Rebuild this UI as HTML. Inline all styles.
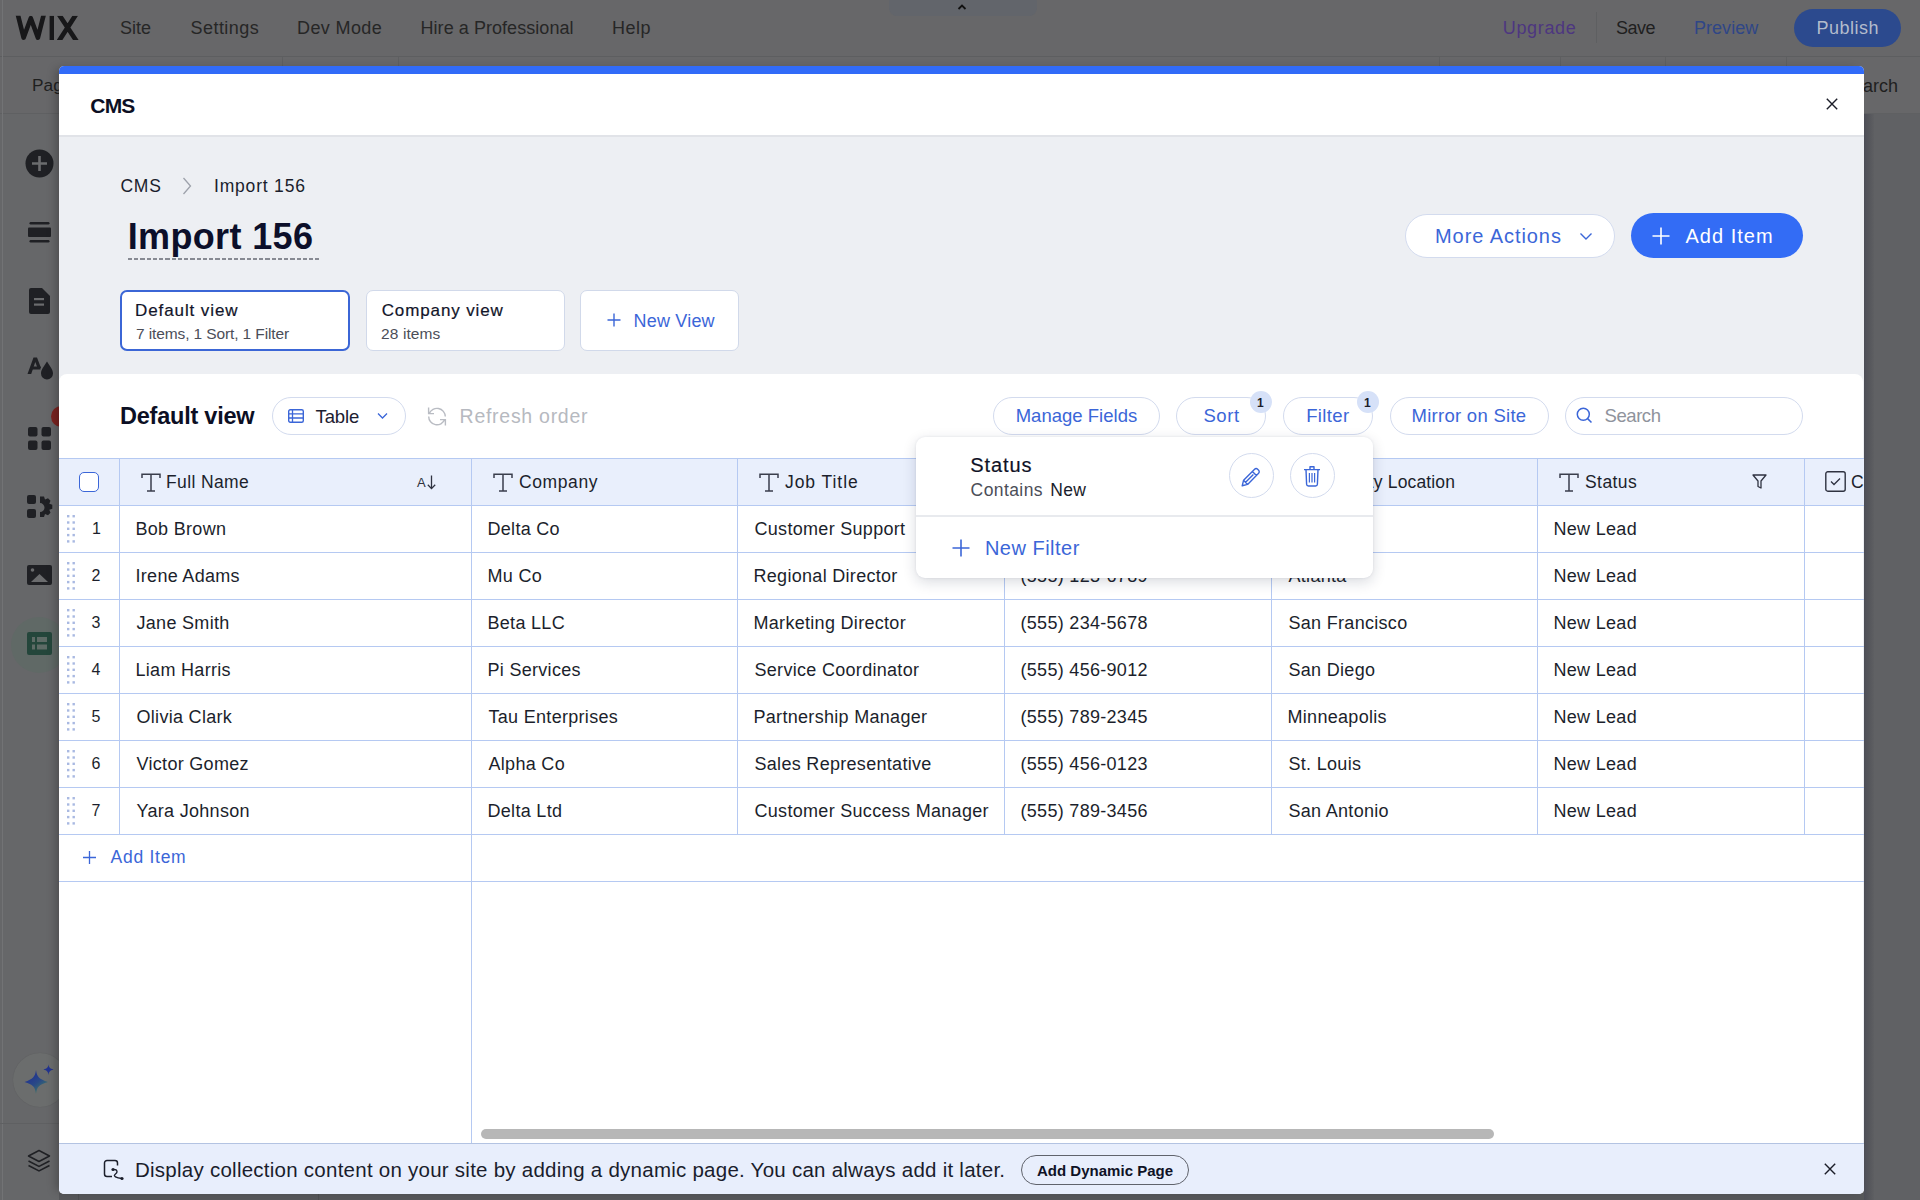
<!DOCTYPE html>
<html><head><meta charset="utf-8"><title>CMS</title>
<style>
html,body{margin:0;padding:0;}
body{width:1920px;height:1200px;position:relative;overflow:hidden;background:#68696b;font-family:"Liberation Sans",sans-serif;}
.a{position:absolute;}
.t{position:absolute;white-space:nowrap;}
#modal{position:absolute;left:59px;top:66px;width:1805px;height:1128px;overflow:hidden;border-radius:5px;}
#inner{position:absolute;left:-59px;top:-66px;width:1920px;height:1200px;}
</style></head><body>
<div class="a" style="left:0px;top:0px;width:1920px;height:56px;background:#676769;"></div>
<div class="a" style="left:0px;top:56px;width:1920px;height:1px;background:#5d5e60;"></div>
<div class="a" style="left:0px;top:57px;width:1920px;height:56px;background:#676769;"></div>
<div class="a" style="left:0px;top:113px;width:1920px;height:1px;background:#5f6062;"></div>
<div class="a" style="left:0px;top:114px;width:59px;height:1086px;background:#666769;"></div>
<div class="a" style="left:2px;top:0px;width:1px;height:1200px;background:#727375;"></div>
<div class="a" style="left:1864px;top:114px;width:56px;height:1086px;background:#606164;"></div>
<div class="a" style="left:1864px;top:114px;width:10px;height:1086px;background:linear-gradient(90deg,#4d4e57,#55565b 50%,#5e5f62);"></div>
<div class="a" style="left:282px;top:57px;width:1px;height:56px;background:#5e5f61;"></div>
<div class="a" style="left:398px;top:57px;width:1px;height:56px;background:#5e5f61;"></div>
<div class="a" style="left:1439px;top:57px;width:1px;height:56px;background:#5e5f61;"></div>
<div class="a" style="left:1560px;top:57px;width:1px;height:56px;background:#5e5f61;"></div>
<div class="a" style="left:1665px;top:57px;width:1px;height:56px;background:#5e5f61;"></div>
<div class="a" style="left:1786px;top:57px;width:1px;height:56px;background:#5e5f61;"></div>
<div class="a" style="left:889px;top:-6px;width:148px;height:22px;background:#62656b;border-radius:8px;"></div>
<svg class="a" style="left:956px;top:2px" width="12" height="9" viewBox="0 0 12 9"><path d="M2.5 7 L6 3.5 L9.5 7" fill="none" stroke="#111" stroke-width="1.8"/></svg>
<svg class="a" style="left:0px;top:0px" width="90" height="56" viewBox="0 0 90 56"><defs><clipPath id="wc"><rect x="0" y="15.8" width="90" height="24.2"/></clipPath></defs><g clip-path="url(#wc)"><path d="M17.2 12 L23.6 37.6 L30.8 18.2 L37.9 37.6 L44.4 12" fill="none" stroke="#171719" stroke-width="4.6" stroke-linejoin="round"/><path d="M49.6 15.8 H54 V40 H49.6z" fill="#171719"/><path d="M57 15.8 L62.6 15.8 L78.6 40 L73 40z M72.4 15.8 L78 15.8 L62.4 40 L56.8 40z" fill="#171719"/></g></svg>
<div class="t " style="left:120.00px;top:19.16px;font-size:18px;line-height:18px;color:#262626;">Site</div>
<div class="t " style="left:190.50px;top:19.16px;font-size:18px;line-height:18px;color:#262626;letter-spacing:0.459px;">Settings</div>
<div class="t " style="left:297.00px;top:19.16px;font-size:18px;line-height:18px;color:#262626;letter-spacing:0.389px;">Dev Mode</div>
<div class="t " style="left:420.50px;top:19.16px;font-size:18px;line-height:18px;color:#262626;letter-spacing:0.052px;">Hire a Professional</div>
<div class="t " style="left:612.10px;top:19.16px;font-size:18px;line-height:18px;color:#262626;letter-spacing:0.430px;">Help</div>
<div class="t " style="left:1502.75px;top:19.16px;font-size:18px;line-height:18px;color:#4d3680;letter-spacing:0.661px;">Upgrade</div>
<div class="a" style="left:1596px;top:12px;width:1px;height:31px;background:#5e5f61;"></div>
<div class="t " style="left:1616.00px;top:19.16px;font-size:18px;line-height:18px;color:#1f1f1f;letter-spacing:-0.506px;">Save</div>
<div class="t " style="left:1694.00px;top:19.16px;font-size:18px;line-height:18px;color:#2f4687;letter-spacing:0.038px;">Preview</div>
<div class="a" style="left:1794px;top:9px;width:107px;height:38px;background:#2c4a8e;border-radius:19px;"></div>
<div class="t " style="left:1816.50px;top:19.16px;font-size:18px;line-height:18px;color:#b3bccc;letter-spacing:0.496px;">Publish</div>
<div class="t " style="left:32.00px;top:77.06px;font-size:17.3px;line-height:17.3px;color:#1f1f1f;">Pages</div>
<div class="t " style="left:1841.00px;top:76.76px;font-size:18px;line-height:18px;color:#1f1f1f;">Search</div>
<svg class="a" style="left:25px;top:149px" width="29" height="29" viewBox="0 0 29 29"><circle cx="14.5" cy="14.5" r="14" fill="#1f2024"/><path d="M14.5 7v15M7 14.5h15" stroke="#6b6c6e" stroke-width="2.6"/></svg>
<svg class="a" style="left:28px;top:221px" width="23" height="22" viewBox="0 0 23 22"><rect x="1.5" y="1" width="20" height="2.5" rx="1.2" fill="#1f2024"/><rect x="0" y="6.5" width="23" height="9.5" rx="1" fill="#1f2024"/><rect x="1.5" y="19" width="20" height="2.5" rx="1.2" fill="#1f2024"/></svg>
<svg class="a" style="left:29px;top:288px" width="21" height="26" viewBox="0 0 21 26"><path d="M2 0h11l8 8v16a2 2 0 0 1-2 2H2a2 2 0 0 1-2-2V2a2 2 0 0 1 2-2z" fill="#1f2024"/><rect x="5" y="10" width="10" height="2.2" fill="#6b6c6e"/><rect x="5" y="15.5" width="10" height="2.2" fill="#6b6c6e"/></svg>
<svg class="a" style="left:27px;top:357px" width="27" height="24" viewBox="0 0 27 24"><path d="M0.5 17 L6.5 0.5 H10 L14 11 H10.5 L8.3 5 L4.2 17z" fill="#1f2024"/><path d="M5 9.5h8.5v3H5z" fill="#1f2024"/><path d="M20 4.5 C22 8 26 12 26 16.5 A6 6 0 0 1 14 16.5 C14 12 18 8 20 4.5z" fill="#1f2024"/></svg>
<div class="a" style="left:51px;top:406px;width:21px;height:21px;background:#7b2320;border-radius:50%;"></div>
<svg class="a" style="left:28px;top:427px" width="23" height="23" viewBox="0 0 23 23"><rect x="0" y="0" width="9.5" height="9.5" rx="2" fill="#1f2024"/><rect x="13.5" y="0" width="9.5" height="9.5" rx="2" fill="#1f2024"/><rect x="0" y="13.5" width="9.5" height="9.5" rx="2" fill="#1f2024"/><rect x="13.5" y="13.5" width="9.5" height="9.5" rx="2" fill="#1f2024"/></svg>
<svg class="a" style="left:26px;top:495px" width="28" height="23" viewBox="0 0 28 23"><rect x="1" y="0" width="9" height="9" rx="2" fill="#1f2024"/><rect x="1" y="14" width="9" height="9" rx="2" fill="#1f2024"/><path d="M14 1.5 h4 l1 3 l3-1.2 l2.5 2.5 l-1.2 3 l3 1 v4 l-3 1 l1.2 3 l-2.5 2.5 l-3-1.2 l-1 3 h-4 v-5 a4.5 4.5 0 0 0 0-9z" fill="#1f2024"/></svg>
<svg class="a" style="left:27px;top:565px" width="25" height="20" viewBox="0 0 25 20"><rect x="0" y="0" width="25" height="20" rx="2" fill="#1f2024"/><circle cx="5.5" cy="5" r="1.8" fill="#6b6c6e"/><path d="M4 17 L12.5 9 L21 17z" fill="#6b6c6e"/></svg>
<div class="a" style="left:11px;top:617px;width:56px;height:56px;background:#606966;border-radius:50%;"></div>
<svg class="a" style="left:27px;top:632px" width="25" height="23" viewBox="0 0 25 23"><rect x="0" y="0" width="25" height="23" rx="2" fill="#24463b"/><rect x="5" y="5" width="3" height="5" fill="#5e6b66"/><rect x="10" y="5" width="10" height="5" fill="#5e6b66"/><rect x="5" y="12.5" width="3" height="5" fill="#5e6b66"/><rect x="10" y="12.5" width="10" height="5" fill="#5e6b66"/></svg>
<div class="a" style="left:13px;top:1053px;width:54px;height:54px;background:#6b6d6d;border-radius:50%;box-shadow:0 0 1px rgba(0,0,0,0.15);"></div>
<svg class="a" style="left:24px;top:1063px" width="32" height="33" viewBox="0 0 32 33"><defs><linearGradient id="g1" x1="0.2" y1="0.1" x2="0.8" y2="0.9"><stop offset="0" stop-color="#1f2d92"/><stop offset="0.55" stop-color="#2a4a86"/><stop offset="1" stop-color="#3f7d62"/></linearGradient></defs><path d="M12 7 C13 14 15 16 24 19 C15 21.5 13 23.5 12 31 C11 23.5 9 21.5 0.5 19 C9 16 11 14 12 7z" fill="url(#g1)"/><path d="M24.5 1.5 C25 4.5 25.8 5.3 29.5 6.5 C25.8 7.7 25 8.5 24.5 12 C24 8.5 23.2 7.7 19.5 6.5 C23.2 5.3 24 4.5 24.5 1.5z" fill="#22338f"/></svg>
<div class="a" style="left:0px;top:1123px;width:59px;height:1px;background:#5f6062;"></div>
<svg class="a" style="left:27px;top:1149px" width="24" height="24" viewBox="0 0 24 24"><path d="M12 1.5 L22.5 7 L12 12.5 L1.5 7z" fill="none" stroke="#1f2024" stroke-width="1.5" stroke-linejoin="round"/><path d="M1.5 12 L12 17.5 L22.5 12" fill="none" stroke="#1f2024" stroke-width="1.5"/><path d="M1.5 16.5 L12 22 L22.5 16.5" fill="none" stroke="#1f2024" stroke-width="1.5"/></svg>
<div class="a" style="left:59px;top:1193px;width:1805px;height:7px;background:#56575a;"></div>
<div class="a" style="left:78px;top:1194px;width:1px;height:6px;background:#4d4e50;"></div>
<div class="a" style="left:318px;top:1194px;width:1px;height:6px;background:#4d4e50;"></div>
<div class="a" style="left:59px;top:66px;width:1805px;height:1128px;border-radius:5px;box-shadow:-6px 0 10px -3px rgba(0,0,0,0.25);background:#fff;"></div>
<div id="modal"><div id="inner">
<div class="a" style="left:59px;top:66px;width:1805px;height:8px;background:#316bf8;"></div>
<div class="a" style="left:59px;top:74px;width:1805px;height:61px;background:#ffffff;"></div>
<div class="a" style="left:59px;top:135px;width:1805px;height:2px;background:#e1e3e8;"></div>
<div class="a" style="left:59px;top:137px;width:1805px;height:1006px;background:#edeff3;"></div>
<div class="t " style="left:90.30px;top:94.92px;font-size:21px;line-height:21px;color:#0c0f24;font-weight:700;letter-spacing:-0.829px;">CMS</div>
<svg class="a" style="left:1826px;top:98px" width="12" height="12" viewBox="0 0 12 12"><path d="M0.8 0.8 L11.2 11.2 M11.2 0.8 L0.8 11.2" stroke="#1b1d28" stroke-width="1.4"/></svg>
<div class="t " style="left:120.40px;top:178.49px;font-size:17.5px;line-height:17.5px;color:#1a1d2c;letter-spacing:0.842px;">CMS</div>
<svg class="a" style="left:182px;top:177px" width="10" height="18" viewBox="0 0 10 18"><path d="M1.5 1 L8.5 9 L1.5 17" fill="none" stroke="#9ea2ab" stroke-width="1.3"/></svg>
<div class="t " style="left:214.00px;top:178.49px;font-size:17.5px;line-height:17.5px;color:#1a1d2c;letter-spacing:0.809px;">Import 156</div>
<div class="t " style="left:127.70px;top:218.73px;font-size:36px;line-height:36px;color:#0c0f2a;font-weight:700;letter-spacing:0.352px;">Import 156</div>
<div class="a" style="left:127.8px;top:258px;width:191px;height:2px;background:repeating-linear-gradient(90deg,#878a93 0 4px,transparent 4px 6.25px);"></div>
<div class="a" style="left:120px;top:290px;width:230px;height:61px;box-sizing:border-box;background:#fff;border:2px solid #3b66d6;border-radius:7px;"></div>
<div class="t " style="left:135.00px;top:301.61px;font-size:17px;line-height:17px;color:#12152a;letter-spacing:0.907px;-webkit-text-stroke:0.2px currentColor;">Default view</div>
<div class="t " style="left:136.00px;top:326.48px;font-size:15.5px;line-height:15.5px;color:#4b4e58;letter-spacing:-0.114px;">7 items, 1 Sort, 1 Filter</div>
<div class="a" style="left:366px;top:290px;width:199px;height:61px;box-sizing:border-box;background:#fff;border:1px solid #d1d9ea;border-radius:7px;"></div>
<div class="t " style="left:381.70px;top:301.61px;font-size:17px;line-height:17px;color:#12152a;letter-spacing:0.881px;-webkit-text-stroke:0.2px currentColor;">Company view</div>
<div class="t " style="left:381.00px;top:326.48px;font-size:15.5px;line-height:15.5px;color:#4b4e58;letter-spacing:0.110px;">28 items</div>
<div class="a" style="left:580px;top:290px;width:159px;height:61px;box-sizing:border-box;background:#fff;border:1px solid #d1d9ea;border-radius:7px;"></div>
<svg class="a" style="left:607px;top:313px" width="14" height="14" viewBox="0 0 14 14"><path d="M7 0.5v13M0.5 7h13" stroke="#3b66d8" stroke-width="1.4"/></svg>
<div class="t " style="left:633.60px;top:311.76px;font-size:18px;line-height:18px;color:#3b66d8;letter-spacing:0.186px;">New View</div>
<div class="a" style="left:1405px;top:214px;width:210px;height:44px;box-sizing:border-box;background:#fff;border:1px solid #d3dbee;border-radius:22px;"></div>
<div class="t " style="left:1435.00px;top:226.27px;font-size:20px;line-height:20px;color:#3b66d8;letter-spacing:0.936px;">More Actions</div>
<svg class="a" style="left:1579px;top:232px" width="14" height="9" viewBox="0 0 14 9"><path d="M1.5 1.5 L7 7 L12.5 1.5" fill="none" stroke="#3b66d8" stroke-width="1.4"/></svg>
<div class="a" style="left:1631px;top:213px;width:172px;height:45px;background:#336cf5;border-radius:23px;"></div>
<svg class="a" style="left:1652px;top:227px" width="18" height="18" viewBox="0 0 18 18"><path d="M9 0.5v17M0.5 9h17" stroke="#fff" stroke-width="1.6"/></svg>
<div class="t " style="left:1685.50px;top:226.27px;font-size:20px;line-height:20px;color:#ffffff;letter-spacing:1.017px;">Add Item</div>
<div class="a" style="left:59px;top:374px;width:1804px;height:769px;background:#fff;border-radius:8px 8px 0 0;"></div>
<div class="t " style="left:120.00px;top:404.81px;font-size:23.5px;line-height:23.5px;color:#0c0f24;font-weight:700;letter-spacing:-0.231px;">Default view</div>
<div class="a" style="left:272px;top:397px;width:134px;height:38px;box-sizing:border-box;border:1px solid #d3dbee;border-radius:19px;background:#fff;"></div>
<svg class="a" style="left:288px;top:409px" width="16" height="14" viewBox="0 0 16 14"><rect x="0.7" y="0.7" width="14.6" height="12.6" rx="1.5" fill="none" stroke="#3b66d8" stroke-width="1.4"/><path d="M0.7 4.8h14.6M0.7 9h14.6M4.5 0.7v12.6" stroke="#3b66d8" stroke-width="1.3"/></svg>
<div class="t " style="left:315.60px;top:407.54px;font-size:18.5px;line-height:18.5px;color:#1d2030;letter-spacing:-0.134px;">Table</div>
<svg class="a" style="left:377px;top:412px" width="11" height="8" viewBox="0 0 11 8"><path d="M1 1.5 L5.5 6 L10 1.5" fill="none" stroke="#3b66d8" stroke-width="1.3"/></svg>
<svg class="a" style="left:426px;top:406px" width="22" height="21" viewBox="0 0 22 21"><path d="M3.3 7.6 A8.3 8.3 0 0 1 19.3 10.6 M18.7 13.6 A8.3 8.3 0 0 1 2.7 10.4 M2.6 1.6 V7.6 H8 M19.4 19.6 V13.6 H14" fill="none" stroke="#b9bcc3" stroke-width="1.4"/></svg>
<div class="t " style="left:459.60px;top:406.99px;font-size:19.5px;line-height:19.5px;color:#b6b9c0;letter-spacing:0.723px;">Refresh order</div>
<div class="a" style="left:993px;top:397px;width:167px;height:38px;box-sizing:border-box;border:1px solid #d3dbee;border-radius:19px;background:#fff;"></div>
<div class="t " style="left:1015.70px;top:406.74px;font-size:18.5px;line-height:18.5px;color:#3b66d8;letter-spacing:0.017px;">Manage Fields</div>
<div class="a" style="left:1176px;top:397px;width:90px;height:38px;box-sizing:border-box;border:1px solid #d3dbee;border-radius:19px;background:#fff;"></div>
<div class="t " style="left:1203.40px;top:406.74px;font-size:18.5px;line-height:18.5px;color:#3b66d8;letter-spacing:0.604px;">Sort</div>
<div class="a" style="left:1250px;top:391px;width:22px;height:22px;background:#d6e1f8;border-radius:50%;"></div>
<div class="t " style="left:1257.00px;top:396.84px;font-size:12px;line-height:12px;color:#1b1e2b;font-weight:700;">1</div>
<div class="a" style="left:1283px;top:397px;width:90px;height:38px;box-sizing:border-box;border:1px solid #d3dbee;border-radius:19px;background:#fff;"></div>
<div class="t " style="left:1306.20px;top:406.74px;font-size:18.5px;line-height:18.5px;color:#3b66d8;letter-spacing:0.370px;">Filter</div>
<div class="a" style="left:1357px;top:391px;width:22px;height:22px;background:#d6e1f8;border-radius:50%;"></div>
<div class="t " style="left:1364.00px;top:396.84px;font-size:12px;line-height:12px;color:#1b1e2b;font-weight:700;">1</div>
<div class="a" style="left:1390px;top:397px;width:159px;height:38px;box-sizing:border-box;border:1px solid #d3dbee;border-radius:19px;background:#fff;"></div>
<div class="t " style="left:1411.50px;top:406.74px;font-size:18.5px;line-height:18.5px;color:#3b66d8;letter-spacing:0.274px;">Mirror on Site</div>
<div class="a" style="left:1565px;top:397px;width:238px;height:38px;box-sizing:border-box;border:1px solid #d3dbee;border-radius:19px;background:#fff;"></div>
<svg class="a" style="left:1576px;top:407px" width="17" height="17" viewBox="0 0 17 17"><circle cx="7.3" cy="7.3" r="6" fill="none" stroke="#3b66d8" stroke-width="1.5"/><path d="M11.6 11.6 L15.5 15.5" stroke="#3b66d8" stroke-width="1.5"/></svg>
<div class="t " style="left:1604.50px;top:406.74px;font-size:18.5px;line-height:18.5px;color:#8f939c;letter-spacing:-0.426px;">Search</div>
<div class="a" style="left:59px;top:458px;width:1805px;height:47px;background:#e9effc;"></div>
<div class="a" style="left:59px;top:458px;width:1805px;height:1px;background:#b5c9f2;"></div>
<div class="a" style="left:59px;top:505px;width:1805px;height:1px;background:#b5c9f2;"></div>
<div class="a" style="left:59px;top:552px;width:1805px;height:1px;background:#b5c9f2;"></div>
<div class="a" style="left:59px;top:599px;width:1805px;height:1px;background:#b5c9f2;"></div>
<div class="a" style="left:59px;top:646px;width:1805px;height:1px;background:#b5c9f2;"></div>
<div class="a" style="left:59px;top:693px;width:1805px;height:1px;background:#b5c9f2;"></div>
<div class="a" style="left:59px;top:740px;width:1805px;height:1px;background:#b5c9f2;"></div>
<div class="a" style="left:59px;top:787px;width:1805px;height:1px;background:#b5c9f2;"></div>
<div class="a" style="left:59px;top:834px;width:1805px;height:1px;background:#b5c9f2;"></div>
<div class="a" style="left:59px;top:881px;width:1805px;height:1px;background:#b5c9f2;"></div>
<div class="a" style="left:119px;top:458px;width:1px;height:376px;background:#b5c9f2;"></div>
<div class="a" style="left:471px;top:458px;width:1px;height:685px;background:#b5c9f2;"></div>
<div class="a" style="left:737px;top:458px;width:1px;height:376px;background:#b5c9f2;"></div>
<div class="a" style="left:1004px;top:458px;width:1px;height:376px;background:#b5c9f2;"></div>
<div class="a" style="left:1271px;top:458px;width:1px;height:376px;background:#b5c9f2;"></div>
<div class="a" style="left:1537px;top:458px;width:1px;height:376px;background:#b5c9f2;"></div>
<div class="a" style="left:1804px;top:458px;width:1px;height:376px;background:#b5c9f2;"></div>
<div class="a" style="left:79px;top:472px;width:20px;height:20px;box-sizing:border-box;border:1.6px solid #3b66d8;border-radius:5px;background:#fff;"></div>
<svg class="a" style="left:141px;top:473px" width="20" height="19" viewBox="0 0 20 19"><path d="M1 5 V1.2 H19 V5 M10 1.2 V18 M6 18 H14" fill="none" stroke="#3a3e4c" stroke-width="1.5"/></svg>
<div class="t " style="left:166.00px;top:474.19px;font-size:17.5px;line-height:17.5px;color:#1c1f2c;letter-spacing:0.374px;">Full Name</div>
<svg class="a" style="left:493px;top:473px" width="20" height="19" viewBox="0 0 20 19"><path d="M1 5 V1.2 H19 V5 M10 1.2 V18 M6 18 H14" fill="none" stroke="#3a3e4c" stroke-width="1.5"/></svg>
<div class="t " style="left:519.00px;top:474.19px;font-size:17.5px;line-height:17.5px;color:#1c1f2c;letter-spacing:0.609px;">Company</div>
<svg class="a" style="left:759px;top:473px" width="20" height="19" viewBox="0 0 20 19"><path d="M1 5 V1.2 H19 V5 M10 1.2 V18 M6 18 H14" fill="none" stroke="#3a3e4c" stroke-width="1.5"/></svg>
<div class="t " style="left:785.00px;top:474.19px;font-size:17.5px;line-height:17.5px;color:#1c1f2c;letter-spacing:0.943px;">Job Title</div>
<svg class="a" style="left:1026px;top:473px" width="20" height="19" viewBox="0 0 20 19"><path d="M1 5 V1.2 H19 V5 M10 1.2 V18 M6 18 H14" fill="none" stroke="#3a3e4c" stroke-width="1.5"/></svg>
<div class="t " style="left:1051.00px;top:474.19px;font-size:17.5px;line-height:17.5px;color:#1c1f2c;">Phone</div>
<svg class="a" style="left:1559px;top:473px" width="20" height="19" viewBox="0 0 20 19"><path d="M1 5 V1.2 H19 V5 M10 1.2 V18 M6 18 H14" fill="none" stroke="#3a3e4c" stroke-width="1.5"/></svg>
<div class="t " style="left:1585.00px;top:474.19px;font-size:17.5px;line-height:17.5px;color:#1c1f2c;letter-spacing:0.428px;">Status</div>
<div class="t " style="left:1352.00px;top:474.19px;font-size:17.5px;line-height:17.5px;color:#1c1f2c;letter-spacing:0.150px;">City Location</div>
<div class="t " style="left:417.00px;top:475.60px;font-size:13px;line-height:13px;color:#2f3240;letter-spacing:-0.400px;">A</div>
<svg class="a" style="left:427px;top:475px" width="9" height="15" viewBox="0 0 9 15"><path d="M4.5 0.5 V13.5 M0.8 9.8 L4.5 13.6 L8.2 9.8" fill="none" stroke="#2f3240" stroke-width="1.3"/></svg>
<svg class="a" style="left:1752px;top:474px" width="15" height="15" viewBox="0 0 15 15"><path d="M1 1 H14 L9 7 V14 L6 12.5 V7z" fill="none" stroke="#2f3240" stroke-width="1.3" stroke-linejoin="round"/></svg>
<svg class="a" style="left:1825px;top:471px" width="21" height="21" viewBox="0 0 21 21"><rect x="0.8" y="0.8" width="19.4" height="19.4" rx="2" fill="none" stroke="#2f3240" stroke-width="1.4"/><path d="M6 10.5 L9 13.5 L15 7.5" fill="none" stroke="#2f3240" stroke-width="1.3"/></svg>
<div class="t " style="left:1851.00px;top:474.19px;font-size:17.5px;line-height:17.5px;color:#1c1f2c;letter-spacing:0.300px;">Created</div>
<svg class="a" style="left:66.6px;top:515px" width="8" height="28" viewBox="0 0 8 28"><rect x="0" y="0" width="2.4" height="2.4" fill="#a9b9e2"/><rect x="0" y="6.3" width="2.4" height="2.4" fill="#a9b9e2"/><rect x="0" y="12.6" width="2.4" height="2.4" fill="#a9b9e2"/><rect x="0" y="18.9" width="2.4" height="2.4" fill="#a9b9e2"/><rect x="0" y="25.2" width="2.4" height="2.4" fill="#a9b9e2"/><rect x="5.5" y="0" width="2.4" height="2.4" fill="#a9b9e2"/><rect x="5.5" y="6.3" width="2.4" height="2.4" fill="#a9b9e2"/><rect x="5.5" y="12.6" width="2.4" height="2.4" fill="#a9b9e2"/><rect x="5.5" y="18.9" width="2.4" height="2.4" fill="#a9b9e2"/><rect x="5.5" y="25.2" width="2.4" height="2.4" fill="#a9b9e2"/></svg>
<div class="t " style="left:92.00px;top:520.96px;font-size:16px;line-height:16px;color:#1c1f2c;">1</div>
<div class="t " style="left:135.50px;top:519.76px;font-size:18px;line-height:18px;color:#1c1f2c;letter-spacing:0.300px;">Bob Brown</div>
<div class="t " style="left:487.50px;top:519.76px;font-size:18px;line-height:18px;color:#1c1f2c;letter-spacing:0.300px;">Delta Co</div>
<div class="t " style="left:754.50px;top:519.76px;font-size:18px;line-height:18px;color:#1c1f2c;letter-spacing:0.300px;">Customer Support</div>
<div class="t " style="left:1020.50px;top:519.76px;font-size:18px;line-height:18px;color:#1c1f2c;letter-spacing:0.300px;">(555) 987-6543</div>
<div class="t " style="left:1288.50px;top:519.76px;font-size:18px;line-height:18px;color:#1c1f2c;letter-spacing:0.300px;">Chicago</div>
<div class="t " style="left:1553.50px;top:519.76px;font-size:18px;line-height:18px;color:#1c1f2c;letter-spacing:0.300px;">New Lead</div>
<svg class="a" style="left:66.6px;top:562px" width="8" height="28" viewBox="0 0 8 28"><rect x="0" y="0" width="2.4" height="2.4" fill="#a9b9e2"/><rect x="0" y="6.3" width="2.4" height="2.4" fill="#a9b9e2"/><rect x="0" y="12.6" width="2.4" height="2.4" fill="#a9b9e2"/><rect x="0" y="18.9" width="2.4" height="2.4" fill="#a9b9e2"/><rect x="0" y="25.2" width="2.4" height="2.4" fill="#a9b9e2"/><rect x="5.5" y="0" width="2.4" height="2.4" fill="#a9b9e2"/><rect x="5.5" y="6.3" width="2.4" height="2.4" fill="#a9b9e2"/><rect x="5.5" y="12.6" width="2.4" height="2.4" fill="#a9b9e2"/><rect x="5.5" y="18.9" width="2.4" height="2.4" fill="#a9b9e2"/><rect x="5.5" y="25.2" width="2.4" height="2.4" fill="#a9b9e2"/></svg>
<div class="t " style="left:91.60px;top:567.96px;font-size:16px;line-height:16px;color:#1c1f2c;">2</div>
<div class="t " style="left:135.50px;top:566.76px;font-size:18px;line-height:18px;color:#1c1f2c;letter-spacing:0.300px;">Irene Adams</div>
<div class="t " style="left:487.50px;top:566.76px;font-size:18px;line-height:18px;color:#1c1f2c;letter-spacing:0.300px;">Mu Co</div>
<div class="t " style="left:753.50px;top:566.76px;font-size:18px;line-height:18px;color:#1c1f2c;letter-spacing:0.300px;">Regional Director</div>
<div class="t " style="left:1020.50px;top:566.76px;font-size:18px;line-height:18px;color:#1c1f2c;letter-spacing:0.300px;">(555) 123-6789</div>
<div class="t " style="left:1288.50px;top:566.76px;font-size:18px;line-height:18px;color:#1c1f2c;letter-spacing:0.300px;">Atlanta</div>
<div class="t " style="left:1553.50px;top:566.76px;font-size:18px;line-height:18px;color:#1c1f2c;letter-spacing:0.300px;">New Lead</div>
<svg class="a" style="left:66.6px;top:609px" width="8" height="28" viewBox="0 0 8 28"><rect x="0" y="0" width="2.4" height="2.4" fill="#a9b9e2"/><rect x="0" y="6.3" width="2.4" height="2.4" fill="#a9b9e2"/><rect x="0" y="12.6" width="2.4" height="2.4" fill="#a9b9e2"/><rect x="0" y="18.9" width="2.4" height="2.4" fill="#a9b9e2"/><rect x="0" y="25.2" width="2.4" height="2.4" fill="#a9b9e2"/><rect x="5.5" y="0" width="2.4" height="2.4" fill="#a9b9e2"/><rect x="5.5" y="6.3" width="2.4" height="2.4" fill="#a9b9e2"/><rect x="5.5" y="12.6" width="2.4" height="2.4" fill="#a9b9e2"/><rect x="5.5" y="18.9" width="2.4" height="2.4" fill="#a9b9e2"/><rect x="5.5" y="25.2" width="2.4" height="2.4" fill="#a9b9e2"/></svg>
<div class="t " style="left:91.60px;top:614.96px;font-size:16px;line-height:16px;color:#1c1f2c;">3</div>
<div class="t " style="left:136.50px;top:613.76px;font-size:18px;line-height:18px;color:#1c1f2c;letter-spacing:0.300px;">Jane Smith</div>
<div class="t " style="left:487.50px;top:613.76px;font-size:18px;line-height:18px;color:#1c1f2c;letter-spacing:0.300px;">Beta LLC</div>
<div class="t " style="left:753.50px;top:613.76px;font-size:18px;line-height:18px;color:#1c1f2c;letter-spacing:0.300px;">Marketing Director</div>
<div class="t " style="left:1020.50px;top:613.76px;font-size:18px;line-height:18px;color:#1c1f2c;letter-spacing:0.300px;">(555) 234-5678</div>
<div class="t " style="left:1288.50px;top:613.76px;font-size:18px;line-height:18px;color:#1c1f2c;letter-spacing:0.300px;">San Francisco</div>
<div class="t " style="left:1553.50px;top:613.76px;font-size:18px;line-height:18px;color:#1c1f2c;letter-spacing:0.300px;">New Lead</div>
<svg class="a" style="left:66.6px;top:656px" width="8" height="28" viewBox="0 0 8 28"><rect x="0" y="0" width="2.4" height="2.4" fill="#a9b9e2"/><rect x="0" y="6.3" width="2.4" height="2.4" fill="#a9b9e2"/><rect x="0" y="12.6" width="2.4" height="2.4" fill="#a9b9e2"/><rect x="0" y="18.9" width="2.4" height="2.4" fill="#a9b9e2"/><rect x="0" y="25.2" width="2.4" height="2.4" fill="#a9b9e2"/><rect x="5.5" y="0" width="2.4" height="2.4" fill="#a9b9e2"/><rect x="5.5" y="6.3" width="2.4" height="2.4" fill="#a9b9e2"/><rect x="5.5" y="12.6" width="2.4" height="2.4" fill="#a9b9e2"/><rect x="5.5" y="18.9" width="2.4" height="2.4" fill="#a9b9e2"/><rect x="5.5" y="25.2" width="2.4" height="2.4" fill="#a9b9e2"/></svg>
<div class="t " style="left:91.60px;top:661.96px;font-size:16px;line-height:16px;color:#1c1f2c;">4</div>
<div class="t " style="left:135.50px;top:660.76px;font-size:18px;line-height:18px;color:#1c1f2c;letter-spacing:0.300px;">Liam Harris</div>
<div class="t " style="left:487.50px;top:660.76px;font-size:18px;line-height:18px;color:#1c1f2c;letter-spacing:0.300px;">Pi Services</div>
<div class="t " style="left:754.50px;top:660.76px;font-size:18px;line-height:18px;color:#1c1f2c;letter-spacing:0.300px;">Service Coordinator</div>
<div class="t " style="left:1020.50px;top:660.76px;font-size:18px;line-height:18px;color:#1c1f2c;letter-spacing:0.300px;">(555) 456-9012</div>
<div class="t " style="left:1288.50px;top:660.76px;font-size:18px;line-height:18px;color:#1c1f2c;letter-spacing:0.300px;">San Diego</div>
<div class="t " style="left:1553.50px;top:660.76px;font-size:18px;line-height:18px;color:#1c1f2c;letter-spacing:0.300px;">New Lead</div>
<svg class="a" style="left:66.6px;top:703px" width="8" height="28" viewBox="0 0 8 28"><rect x="0" y="0" width="2.4" height="2.4" fill="#a9b9e2"/><rect x="0" y="6.3" width="2.4" height="2.4" fill="#a9b9e2"/><rect x="0" y="12.6" width="2.4" height="2.4" fill="#a9b9e2"/><rect x="0" y="18.9" width="2.4" height="2.4" fill="#a9b9e2"/><rect x="0" y="25.2" width="2.4" height="2.4" fill="#a9b9e2"/><rect x="5.5" y="0" width="2.4" height="2.4" fill="#a9b9e2"/><rect x="5.5" y="6.3" width="2.4" height="2.4" fill="#a9b9e2"/><rect x="5.5" y="12.6" width="2.4" height="2.4" fill="#a9b9e2"/><rect x="5.5" y="18.9" width="2.4" height="2.4" fill="#a9b9e2"/><rect x="5.5" y="25.2" width="2.4" height="2.4" fill="#a9b9e2"/></svg>
<div class="t " style="left:91.60px;top:708.96px;font-size:16px;line-height:16px;color:#1c1f2c;">5</div>
<div class="t " style="left:136.50px;top:707.76px;font-size:18px;line-height:18px;color:#1c1f2c;letter-spacing:0.300px;">Olivia Clark</div>
<div class="t " style="left:488.50px;top:707.76px;font-size:18px;line-height:18px;color:#1c1f2c;letter-spacing:0.300px;">Tau Enterprises</div>
<div class="t " style="left:753.50px;top:707.76px;font-size:18px;line-height:18px;color:#1c1f2c;letter-spacing:0.300px;">Partnership Manager</div>
<div class="t " style="left:1020.50px;top:707.76px;font-size:18px;line-height:18px;color:#1c1f2c;letter-spacing:0.300px;">(555) 789-2345</div>
<div class="t " style="left:1287.50px;top:707.76px;font-size:18px;line-height:18px;color:#1c1f2c;letter-spacing:0.300px;">Minneapolis</div>
<div class="t " style="left:1553.50px;top:707.76px;font-size:18px;line-height:18px;color:#1c1f2c;letter-spacing:0.300px;">New Lead</div>
<svg class="a" style="left:66.6px;top:750px" width="8" height="28" viewBox="0 0 8 28"><rect x="0" y="0" width="2.4" height="2.4" fill="#a9b9e2"/><rect x="0" y="6.3" width="2.4" height="2.4" fill="#a9b9e2"/><rect x="0" y="12.6" width="2.4" height="2.4" fill="#a9b9e2"/><rect x="0" y="18.9" width="2.4" height="2.4" fill="#a9b9e2"/><rect x="0" y="25.2" width="2.4" height="2.4" fill="#a9b9e2"/><rect x="5.5" y="0" width="2.4" height="2.4" fill="#a9b9e2"/><rect x="5.5" y="6.3" width="2.4" height="2.4" fill="#a9b9e2"/><rect x="5.5" y="12.6" width="2.4" height="2.4" fill="#a9b9e2"/><rect x="5.5" y="18.9" width="2.4" height="2.4" fill="#a9b9e2"/><rect x="5.5" y="25.2" width="2.4" height="2.4" fill="#a9b9e2"/></svg>
<div class="t " style="left:91.60px;top:755.96px;font-size:16px;line-height:16px;color:#1c1f2c;">6</div>
<div class="t " style="left:136.50px;top:754.76px;font-size:18px;line-height:18px;color:#1c1f2c;letter-spacing:0.300px;">Victor Gomez</div>
<div class="t " style="left:488.50px;top:754.76px;font-size:18px;line-height:18px;color:#1c1f2c;letter-spacing:0.300px;">Alpha Co</div>
<div class="t " style="left:754.50px;top:754.76px;font-size:18px;line-height:18px;color:#1c1f2c;letter-spacing:0.300px;">Sales Representative</div>
<div class="t " style="left:1020.50px;top:754.76px;font-size:18px;line-height:18px;color:#1c1f2c;letter-spacing:0.300px;">(555) 456-0123</div>
<div class="t " style="left:1288.50px;top:754.76px;font-size:18px;line-height:18px;color:#1c1f2c;letter-spacing:0.300px;">St. Louis</div>
<div class="t " style="left:1553.50px;top:754.76px;font-size:18px;line-height:18px;color:#1c1f2c;letter-spacing:0.300px;">New Lead</div>
<svg class="a" style="left:66.6px;top:797px" width="8" height="28" viewBox="0 0 8 28"><rect x="0" y="0" width="2.4" height="2.4" fill="#a9b9e2"/><rect x="0" y="6.3" width="2.4" height="2.4" fill="#a9b9e2"/><rect x="0" y="12.6" width="2.4" height="2.4" fill="#a9b9e2"/><rect x="0" y="18.9" width="2.4" height="2.4" fill="#a9b9e2"/><rect x="0" y="25.2" width="2.4" height="2.4" fill="#a9b9e2"/><rect x="5.5" y="0" width="2.4" height="2.4" fill="#a9b9e2"/><rect x="5.5" y="6.3" width="2.4" height="2.4" fill="#a9b9e2"/><rect x="5.5" y="12.6" width="2.4" height="2.4" fill="#a9b9e2"/><rect x="5.5" y="18.9" width="2.4" height="2.4" fill="#a9b9e2"/><rect x="5.5" y="25.2" width="2.4" height="2.4" fill="#a9b9e2"/></svg>
<div class="t " style="left:91.60px;top:802.96px;font-size:16px;line-height:16px;color:#1c1f2c;">7</div>
<div class="t " style="left:136.50px;top:801.76px;font-size:18px;line-height:18px;color:#1c1f2c;letter-spacing:0.300px;">Yara Johnson</div>
<div class="t " style="left:487.50px;top:801.76px;font-size:18px;line-height:18px;color:#1c1f2c;letter-spacing:0.300px;">Delta Ltd</div>
<div class="t " style="left:754.50px;top:801.76px;font-size:18px;line-height:18px;color:#1c1f2c;letter-spacing:0.300px;">Customer Success Manager</div>
<div class="t " style="left:1020.50px;top:801.76px;font-size:18px;line-height:18px;color:#1c1f2c;letter-spacing:0.300px;">(555) 789-3456</div>
<div class="t " style="left:1288.50px;top:801.76px;font-size:18px;line-height:18px;color:#1c1f2c;letter-spacing:0.300px;">San Antonio</div>
<div class="t " style="left:1553.50px;top:801.76px;font-size:18px;line-height:18px;color:#1c1f2c;letter-spacing:0.300px;">New Lead</div>
<svg class="a" style="left:83px;top:851px" width="13" height="13" viewBox="0 0 13 13"><path d="M6.5 0v13M0 6.5h13" stroke="#3b66d8" stroke-width="1.3"/></svg>
<div class="t " style="left:110.60px;top:848.99px;font-size:17.5px;line-height:17.5px;color:#3b66d8;letter-spacing:0.720px;">Add Item</div>
<div class="a" style="left:481px;top:1129px;width:1013px;height:10px;background:#b7b7b7;border-radius:5px;"></div>
<div class="a" style="left:916px;top:437px;width:457px;height:141px;background:#fff;border-radius:9px;box-shadow:0 4px 14px rgba(20,30,60,0.16),0 0 3px rgba(20,30,60,0.08);"></div>
<div class="t " style="left:970.30px;top:454.77px;font-size:20px;line-height:20px;color:#0f1226;letter-spacing:0.900px;-webkit-text-stroke:0.2px currentColor;">Status</div>
<div class="t " style="left:970.60px;top:482.09px;font-size:17.5px;line-height:17.5px;color:#4b4e58;letter-spacing:0.412px;">Contains</div>
<div class="t " style="left:1050.20px;top:482.09px;font-size:17.5px;line-height:17.5px;color:#1a1d2c;letter-spacing:0.315px;">New</div>
<div class="a" style="left:1229px;top:453px;width:45px;height:45px;box-sizing:border-box;border:1px solid #d3dbee;border-radius:50%;background:#fff;"></div>
<svg class="a" style="left:1241px;top:466px" width="20" height="21" viewBox="0 0 20 21"><path d="M1.2 19.8 L2.6 14.2 L13.6 3.2 a2.1 2.1 0 0 1 3 0 l1 1 a2.1 2.1 0 0 1 0 3 L6.6 18.4z M2.6 14.2 L6.6 18.4 M11.4 5.4 L15.4 9.4 M4.6 16.3 L12.4 8.5" fill="none" stroke="#3b66d8" stroke-width="1.4" stroke-linejoin="round"/></svg>
<div class="a" style="left:1290px;top:453px;width:45px;height:45px;box-sizing:border-box;border:1px solid #d3dbee;border-radius:50%;background:#fff;"></div>
<svg class="a" style="left:1302.5px;top:465px" width="18" height="22" viewBox="0 0 18 22"><path d="M1 4.6 H17 M7 4.6 V1.8 H11 V4.6 M3 4.6 L3.6 19.3 Q3.7 21 5.4 21 H12.6 Q14.3 21 14.4 19.3 L15 4.6" fill="none" stroke="#3b66d8" stroke-width="1.4" stroke-linejoin="round"/><path d="M6.4 8 V17.6 M9 8 V17.6 M11.6 8 V17.6" stroke="#3b66d8" stroke-width="1.2"/></svg>
<div class="a" style="left:916px;top:515px;width:457px;height:2px;background:#e8eaee;"></div>
<svg class="a" style="left:952px;top:539px" width="18" height="18" viewBox="0 0 18 18"><path d="M9 0.5v17M0.5 9h17" stroke="#3b66d8" stroke-width="1.6"/></svg>
<div class="t " style="left:984.90px;top:538.07px;font-size:20px;line-height:20px;color:#3b66d8;letter-spacing:0.494px;">New Filter</div>
<div class="a" style="left:59px;top:1143px;width:1805px;height:1px;background:#b3c3e2;"></div>
<div class="a" style="left:59px;top:1144px;width:1805px;height:50px;background:#e8eefc;"></div>
<svg class="a" style="left:103px;top:1159px" width="22" height="22" viewBox="0 0 22 22"><path d="M9 17.5 H4 a2.5 2.5 0 0 1-2.5-2.5 V4 a2.5 2.5 0 0 1 2.5-2.5 H12 a2.5 2.5 0 0 1 2.5 2.5 V6.5" fill="none" stroke="#1b1e2b" stroke-width="1.5"/><circle cx="10" cy="10.5" r="1.6" fill="#1b1e2b"/><circle cx="19" cy="19.5" r="1.6" fill="#1b1e2b"/><path d="M10 10.5 C15 10 15 13.5 12 15.5 C10 17 13 19 19 19.5" fill="none" stroke="#1b1e2b" stroke-width="1.4"/></svg>
<div class="t " style="left:135.00px;top:1160.15px;font-size:20.5px;line-height:20.5px;color:#1a1d2c;letter-spacing:0.251px;">Display collection content on your site by adding a dynamic page. You can always add it later.</div>
<div class="a" style="left:1021px;top:1155px;width:168px;height:30px;box-sizing:border-box;border:1px solid #60636c;border-radius:15px;"></div>
<div class="t " style="left:1036.90px;top:1163.30px;font-size:15px;line-height:15px;color:#0f1226;font-weight:700;letter-spacing:0.025px;">Add Dynamic Page</div>
<svg class="a" style="left:1824px;top:1163px" width="12" height="12" viewBox="0 0 12 12"><path d="M0.8 0.8 L11.2 11.2 M11.2 0.8 L0.8 11.2" stroke="#1b1d28" stroke-width="1.4"/></svg>
</div></div>
</body></html>
